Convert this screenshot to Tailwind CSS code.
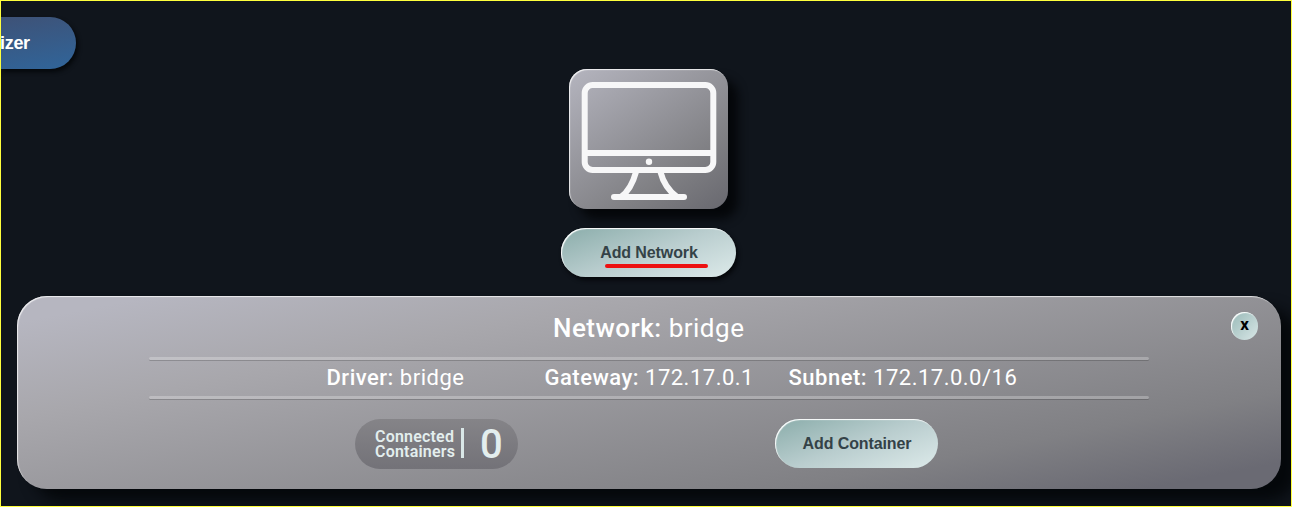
<!DOCTYPE html>
<html lang="en">
<head>
<meta charset="utf-8">
<title>Network Visualizer</title>
<script src="https://cdn.jsdelivr.net/npm/@tailwindcss/browser@4"></script>
</head>
<body class="h-[507px] w-[1292px] overflow-hidden border border-[#ffff3c] bg-[#10151c] font-['Roboto',sans-serif] text-white">
<header class="flex h-[68px] pt-4">
  <div class="flex h-[52px] w-[75px] items-center overflow-visible rounded-r-full bg-[linear-gradient(170deg,#3e5277,#30659a)] pt-px text-[18px] font-bold tracking-[-0.3px] shadow-[2px_3px_4px_#05080b] font-['Liberation_Sans',Arial,sans-serif]"><span class="-ml-px">izer</span></div>
</header>
<main class="flex flex-col">
  <div class="ml-[568px] h-[140px] w-[159px] rounded-[18px] bg-[linear-gradient(145deg,#b5b5bf_0%,#808084_70%,#68686f_100%)] shadow-[10px_10px_10px_#05070a,inset_1px_1px_1px_#ffffffd0]">
    <svg class="h-[140px] w-[159px]" viewBox="0 0 159 140" fill="none" stroke="#f7f7f8" stroke-width="6">
      <rect x="15.7" y="16" width="128.6" height="85" rx="8"/>
      <path d="M16 84H144"/>
      <path d="M67 103C64 114 60 122 52 128M91.5 103C94 113 100 122 108 128"/>
      <path d="M45 128H115" stroke-linecap="round"/>
      <circle cx="80" cy="92.7" r="3.2" fill="#f7f7f8" stroke="none"/>
    </svg>
  </div>
  <button class="relative mt-[19px] ml-[560px] h-[49px] w-[175px] rounded-full bg-[linear-gradient(160deg,#8fb0ae_5%,#b9cdce_50%,#d9e7e7_95%)] pl-px font-['Liberation_Sans',Arial,sans-serif] text-base font-bold tracking-[-0.1px] text-[#344247] shadow-[2px_3px_4px_#05070a,inset_1px_1px_1px_#fff]">Add Network
    <span class="absolute top-[36px] left-[44px] h-1 w-[103px] rounded-full bg-[#ed1010]"></span>
  </button>
  <section class="mt-[19px] ml-4 h-[193px] w-[1264px] rounded-[30px] bg-[linear-gradient(169deg,#b6b6c0_6%,#a8a7ac_28%,#808084_78%,#6a6a73_94%)] shadow-[16px_12px_14px_#05080b,inset_1px_1px_1px_#ffffffc0]">
    <div class="flex h-[61px]">
      <h1 class="ml-[536px] w-[678px] pt-[13px] text-[26px] leading-[38px] tracking-[0.5px] whitespace-nowrap"><span class="font-medium">Network:</span> bridge</h1>
      <button class="mt-4 flex h-7 w-[27px] justify-center rounded-full bg-linear-to-br from-[#98b9b7] to-[#d9e7e7] text-[17px] leading-[25px] font-bold text-black shadow-[inset_1px_1px_1px_#fff]">x</button>
    </div>
    <div class="ml-[132px] h-[3px] w-[1000px] rounded-full bg-white/25 shadow-[0_1px_0_#0000002e]"></div>
    <div class="ml-[309.5px] flex h-9 text-[22px] leading-[35px] tracking-[0.5px] whitespace-nowrap">
      <p class="w-[218px]"><span class="font-medium">Driver:</span> bridge</p>
      <p class="w-[244px]"><span class="font-medium">Gateway:</span> 172.17.0.1</p>
      <p><span class="font-medium">Subnet:</span> 172.17.0.0/16</p>
    </div>
    <div class="ml-[132px] h-[3px] w-[1000px] rounded-full bg-white/25 shadow-[0_1px_0_#0000002e]"></div>
    <div class="mt-5 ml-[338px] flex">
      <div class="flex h-[50px] w-[163px] items-center rounded-full bg-linear-to-b from-[#858488] to-[#737278] pl-5 text-[#e3eeee]">
        <p class="w-[86px] text-base leading-[15px] font-semibold tracking-[0.2px]">Connected<br>Containers</p>
        <span class="mb-0.5 h-[30px] w-[3px] bg-[#d9e7e7]"></span>
        <span class="ml-4 pt-px text-[40px] leading-[48px] font-medium">0</span>
      </div>
      <button class="ml-[257px] h-[49px] w-[163px] rounded-full bg-[linear-gradient(160deg,#8fb0ae_5%,#b9cdce_50%,#d9e7e7_95%)] pl-px font-['Liberation_Sans',Arial,sans-serif] text-base font-bold tracking-[-0.1px] text-[#344247] shadow-[inset_1px_1px_1px_#fff]">Add Container</button>
    </div>
  </section>
</main>
</body>
</html>
